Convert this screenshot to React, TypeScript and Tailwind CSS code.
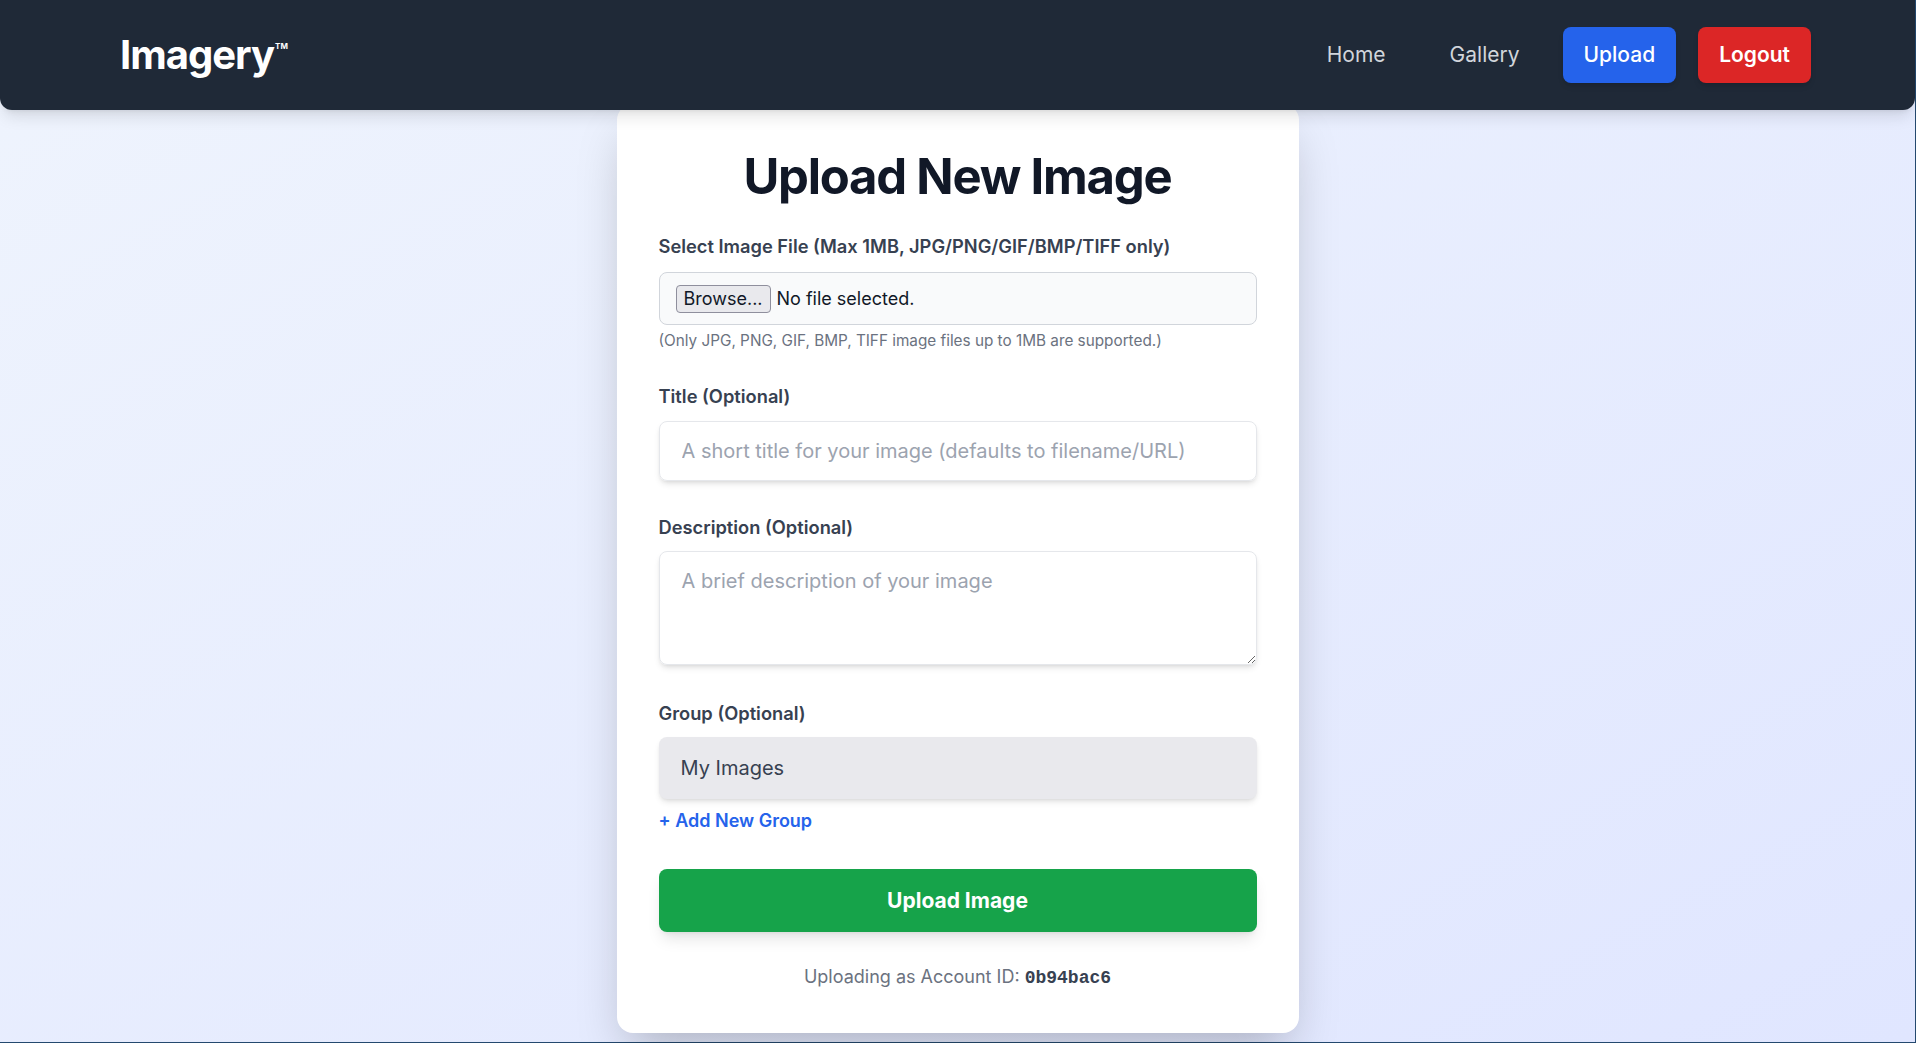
export default function App() {
  return (
    <div className="min-h-screen bg-linear-to-br from-[#eff4fd] to-[#e0e6ff] font-['Inter',sans-serif] border-r border-b border-[#24496f] flex flex-col">
      <header className="relative z-10 h-[110px] bg-[#1f2937] rounded-b-xl shadow-lg flex items-center justify-between pl-[120px] pr-[104px]">
        <div className="flex items-start text-white">
          <span className="text-[40px] font-bold tracking-tight leading-none">Imagery</span>
          <span className="text-[8px] font-bold ml-[1px] mt-[5px]">TM</span>
        </div>
        <nav className="flex items-center gap-[22px] text-[21px]">
          <a className="px-[21px] py-3 text-[#d1d5db]">Home</a>
          <a className="px-[21px] py-3 text-[#d1d5db]">Gallery</a>
          <a className="px-[21px] py-3 rounded-lg bg-[#2563eb] text-white font-medium shadow-md">Upload</a>
          <a className="px-[21px] py-3 rounded-lg bg-[#dc2626] text-white font-semibold shadow-md">Logout</a>
        </nav>
      </header>

      <main className="flex justify-center -mt-[6px] pb-[8px]">
        <div className="w-[682px] bg-white rounded-2xl shadow-2xl px-[42px] pt-[48px] pb-[41px]">
          <h1 className="text-[49px] font-bold text-[#111827] text-center tracking-tight leading-none mb-[31px]">
            Upload New Image
          </h1>

          <div className="mb-[30px]">
            <label className="block text-[18.3px] leading-7 font-semibold text-[#374151] mb-[12px]">
              Select Image File (Max 1MB, JPG/PNG/GIF/BMP/TIFF only)
            </label>
            <div className="h-[53px] flex items-center px-4 bg-[#f9fafb] border border-[#d1d5db] rounded-lg text-lg text-[#111827]">
              <span className="px-[7px] py-[1px] bg-[#e9e9ed] border border-[#8f8f9d] rounded text-lg leading-6 mr-[6px]">
                Browse...
              </span>
              <span>No file selected.</span>
            </div>
            <p className="mt-[5px] text-[15.3px] leading-[22px] text-[#6b7280]">
              (Only JPG, PNG, GIF, BMP, TIFF image files up to 1MB are supported.)
            </p>
          </div>

          <div className="mb-8">
            <label className="block text-[18.3px] leading-7 font-semibold text-[#374151] mb-[11px]">Title (Optional)</label>
            <input
              type="text"
              placeholder="A short title for your image (defaults to filename/URL)"
              className="block w-full h-[60px] px-[22px] text-xl border border-[#e5e7eb] rounded-lg shadow-md placeholder:text-[#9ca3af] outline-none"
            />
          </div>

          <div className="mb-[34px]">
            <label className="block text-[18.3px] leading-7 font-semibold text-[#374151] mb-[10px]">Description (Optional)</label>
            <textarea
              placeholder="A brief description of your image"
              className="block w-full h-[114px] px-[22px] py-[15px] text-xl border border-[#e5e7eb] rounded-lg shadow-md placeholder:text-[#9ca3af] outline-none"
            />
          </div>

          <div className="mb-[34px]">
            <label className="block text-[18.3px] leading-7 font-semibold text-[#374151] mb-[10px]">Group (Optional)</label>
            <div className="h-[62px] flex items-center px-[22px] bg-[#e9e9ed] rounded-lg shadow-md text-xl text-[#374151]">
              My Images
            </div>
            <button className="block mt-2 text-lg leading-7 font-semibold text-[#2563eb]">+ Add New Group</button>
          </div>

          <button className="w-full h-[63px] bg-[#16a34a] text-white text-[21px] font-bold rounded-lg shadow-lg">
            Upload Image
          </button>

          <p className="mt-[31px] text-center text-lg leading-7 text-[#6b7280]">
            Uploading as Account ID:{' '}
            <code className="font-['Liberation_Mono',monospace] font-bold text-lg text-[#374151]">0b94bac6</code>
          </p>
        </div>
      </main>
    </div>
  );
}
